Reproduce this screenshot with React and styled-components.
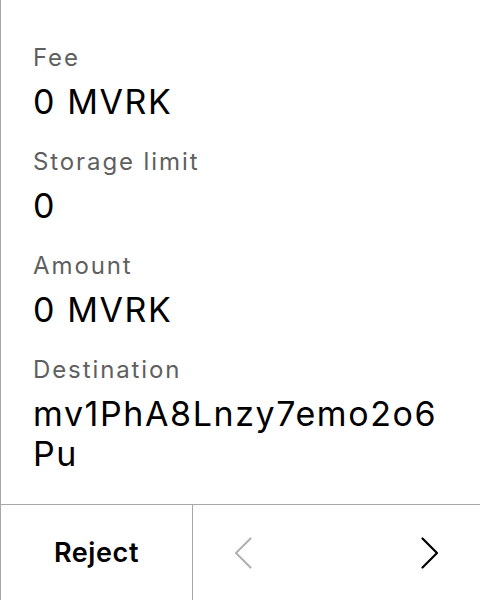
import React from "react";
import styled, { createGlobalStyle } from "styled-components";

const Global = createGlobalStyle`
  html, body { margin: 0; padding: 0; background: #fff; }
  body {
    font-family: Inter, "Noto Sans", sans-serif;
    -webkit-font-smoothing: antialiased;
  }
  * { box-sizing: border-box; }
`;

const Screen = styled.div`
  width: 480px;
  height: 600px;
  display: flex;
  flex-direction: column;
  border-left: 1px solid #a8a8a8;
  background: #fff;
  color: #000;
`;

const Details = styled.div`
  flex: 1;
  padding: 42px 32px 0 32px;
  display: flex;
  flex-direction: column;
  gap: 24px;
`;

const Field = styled.div`
  display: flex;
  flex-direction: column;
  gap: 8px;
`;

const Label = styled.div`
  font-size: 24px;
  line-height: 32px;
  letter-spacing: 1.9px;
  color: #5f5f5f;
`;

const Value = styled.div`
  font-size: 34px;
  line-height: 40px;
  letter-spacing: 1.6px;
  color: #000;
  word-break: break-all;
`;

const Footer = styled.div`
  height: 96px;
  border-top: 1px solid #a8a8a8;
  display: grid;
  grid-template-columns: 192px 1fr;
`;

const RejectButton = styled.button`
  border: none;
  border-right: 1px solid #a8a8a8;
  background: transparent;
  font-family: inherit;
  font-size: 27px;
  font-weight: 600;
  letter-spacing: 0.6px;
  color: #000;
  display: flex;
  align-items: center;
  justify-content: center;
  padding: 0;
`;

const Nav = styled.div`
  display: flex;
  justify-content: space-between;
  align-items: center;
`;

const NavButton = styled.button`
  width: 100px;
  height: 100%;
  border: none;
  background: transparent;
  display: flex;
  align-items: center;
  justify-content: center;
  padding: 0;
  color: ${(p) => (p.disabled ? "#b3b3b3" : "#000")};
`;

const Chevron = ({ dir }) => (
  <svg width="18" height="32" viewBox="0 0 18 32" fill="none">
    <path
      d={dir === "left" ? "M16.5 1.5 L2 16 L16.5 30.5" : "M1.5 1.5 L16 16 L1.5 30.5"}
      stroke="currentColor"
      strokeWidth="2.2"
      strokeLinecap="round"
      strokeLinejoin="round"
    />
  </svg>
);

const fields = [
  { label: "Fee", value: "0 MVRK" },
  { label: "Storage limit", value: "0" },
  { label: "Amount", value: "0 MVRK" },
  { label: "Destination", value: "mv1PhA8Lnzy7emo2o6Pu" },
];

export default function App() {
  return (
    <>
      <Global />
      <Screen>
        <Details>
          {fields.map((f) => (
            <Field key={f.label}>
              <Label>{f.label}</Label>
              <Value>{f.value}</Value>
            </Field>
          ))}
        </Details>
        <Footer>
          <RejectButton>Reject</RejectButton>
          <Nav>
            <NavButton disabled>
              <Chevron dir="left" />
            </NavButton>
            <NavButton>
              <Chevron dir="right" />
            </NavButton>
          </Nav>
        </Footer>
      </Screen>
    </>
  );
}
